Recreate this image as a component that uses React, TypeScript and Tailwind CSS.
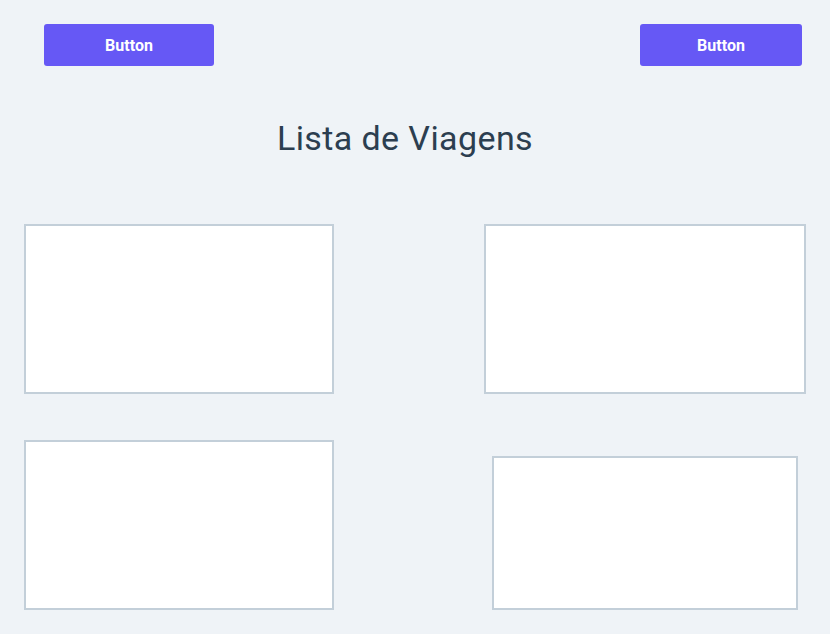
export default function App() {
  return (
    <div
      className="min-h-[634px] w-[830px] bg-[#eff3f7] overflow-hidden"
      style={{ fontFamily: "Roboto, 'Liberation Sans', sans-serif" }}
    >
      {/* top buttons */}
      <div className="flex justify-between pt-[24px] pl-[44px] pr-[28px]">
        <button className="w-[170px] h-[42px] pt-[2px] rounded-[3px] bg-[#6658f5] text-white font-bold text-[16px]">
          Button
        </button>
        <button className="w-[162px] h-[42px] pt-[2px] rounded-[3px] bg-[#6658f5] text-white font-bold text-[16px]">
          Button
        </button>
      </div>

      {/* title */}
      <h1 className="mt-[50px] pr-[20px] text-center text-[34px] tracking-[0.4px] leading-[44px] text-[#2c3e50]">
        Lista de Viagens
      </h1>

      {/* cards */}
      <div className="mt-[64px] flex justify-between px-[24px]">
        <div className="w-[310px] h-[170px] bg-white border-2 border-[#c3cfd9]" />
        <div className="w-[322px] h-[170px] bg-white border-2 border-[#c3cfd9]" />
      </div>
      <div className="mt-[46px] flex justify-between pl-[24px] pr-[32px]">
        <div className="w-[310px] h-[170px] bg-white border-2 border-[#c3cfd9]" />
        <div className="mt-[16px] w-[306px] h-[154px] bg-white border-2 border-[#c3cfd9]" />
      </div>
    </div>
  );
}
